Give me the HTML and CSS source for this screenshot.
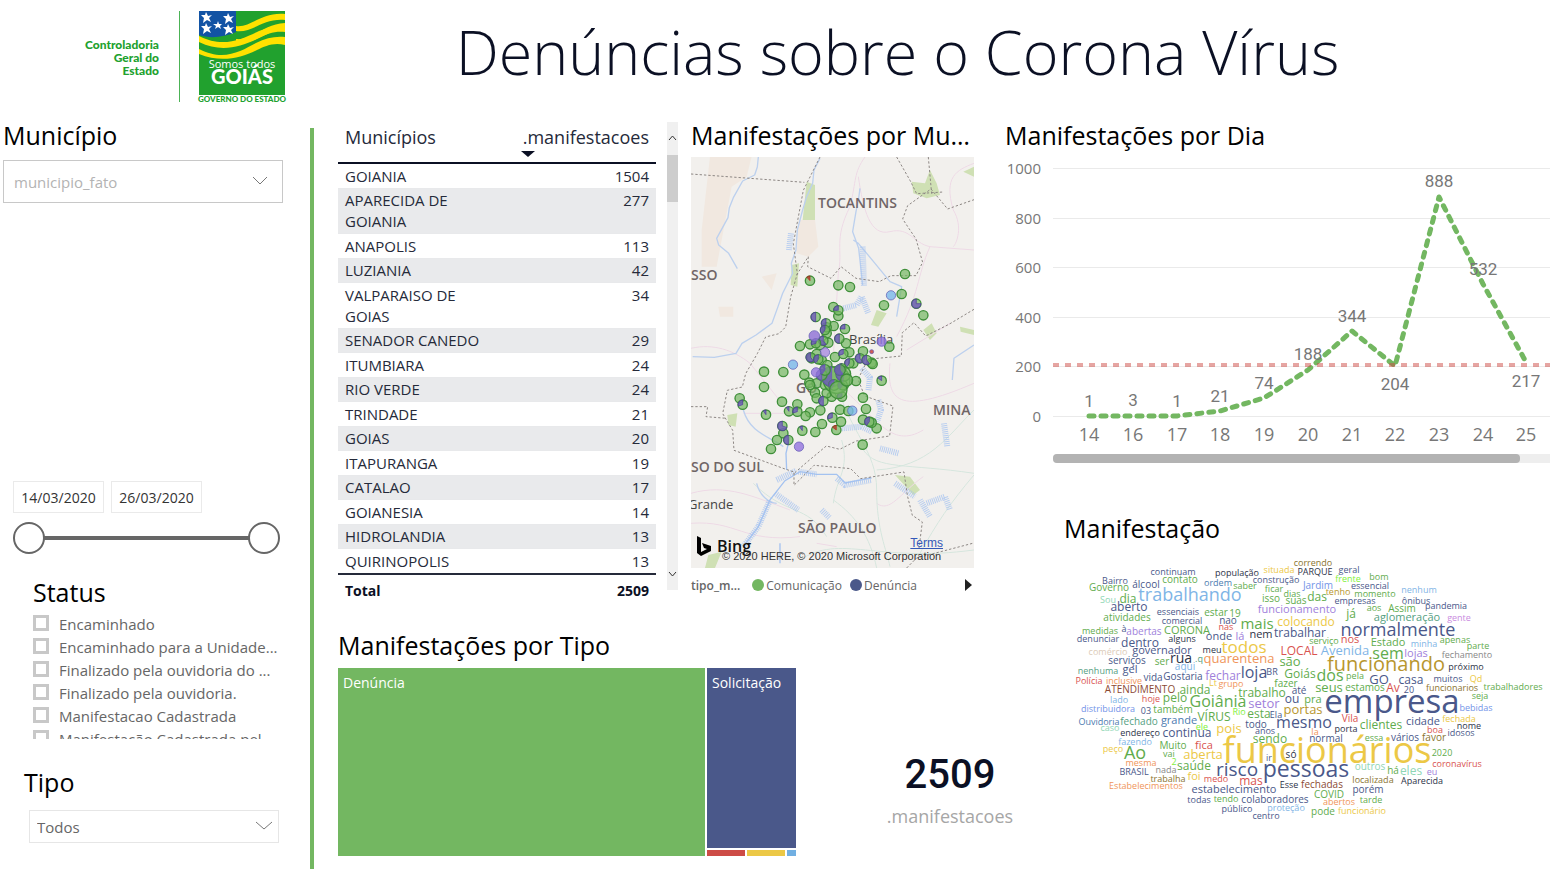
FILE: index.html
```html
<!DOCTYPE html>
<html lang="pt-BR">
<head>
<meta charset="utf-8">
<title>Denúncias sobre o Corona Vírus</title>
<link rel="stylesheet" href="styles.css">
</head>
<body>
<header class="header">
	<div class="brand">
		<div class="brand-name">Controladoria<br>Geral do<br>Estado</div>
		<svg class="brand-logo" viewBox="0 0 86 91" role="img" aria-label="Goiás">
			<rect width="86" height="84" fill="#21a12e"/>
			<path d="M37 15C52 17 62 1 86 3V9C64 7 54 22 37 20zM37 28C54 30 64 13 86 12V18C66 20 55 34 37 32z" fill="#ffe100"/>
			<path d="M0 25C25 38 45 27 60 20C70 16 77 15 86 16V21C75 20 68 23 60 27C42 36 22 42 0 31z" fill="#ffe100"/>
			<path d="M0 38C25 51 42 40 57 32C67 27 76 25 86 26V34C75 31 66 35 58 39C42 47 22 52 0 43z" fill="#ffe100"/>
			<path d="M0 0H37V21C25 26 12 28 0 24z" fill="#1253a4"/>
			<g fill="#fff">
				<path id="star" d="M7 1l2 4 4-1-3 3 2 4-4-2-4 3 1-5-3-3 4 0z"/>
				<use href="#star" x="22" y="1"/>
				<use href="#star" x="0" y="11"/>
				<use href="#star" x="22" y="12"/>
				<path d="M19 10l1 3 3 0-2 2 1 3-3-2-3 2 1-3-3-2 4 0z"/>
			</g>
			<text x="43" y="57" class="logo-small">Somos todos</text>
			<text x="43" y="73" class="logo-big">GOIÁS</text>
			<text x="43" y="91" class="logo-foot">GOVERNO DO ESTADO</text>
		</svg>
	</div>
	<h1>Denúncias sobre o Corona Vírus</h1>
</header>

<main class="main">
	<aside class="filters">
		<label class="title" for="municipio">Município</label>
		<div class="dropdown dropdown-big">
			<select id="municipio"><option>municipio_fato</option></select>
			<svg viewBox="0 0 16 10"><path d="M1 1l7 7 7-7"/></svg>
		</div>
		<div class="dates">
			<input type="text" value="14/03/2020" aria-label="Data inicial">
			<input type="text" value="26/03/2020" aria-label="Data final">
		</div>
		<div class="slider">
			<input type="range" min="0" max="12" value="0" aria-label="Início">
			<input type="range" min="0" max="12" value="12" aria-label="Fim">
		</div>
		<h2 class="title status-title">Status</h2>
		<div class="status">
			<label><input type="checkbox"><span>Encaminhado</span></label>
			<label><input type="checkbox"><span>Encaminhado para a Unidade...</span></label>
			<label><input type="checkbox"><span>Finalizado pela ouvidoria do ...</span></label>
			<label><input type="checkbox"><span>Finalizado pela ouvidoria.</span></label>
			<label><input type="checkbox"><span>Manifestacao Cadastrada</span></label>
			<label><input type="checkbox"><span>Manifestação Cadastrada pel</span></label>
		</div>
		<label class="title tipo-title" for="tipo">Tipo</label>
		<div class="dropdown dropdown-small">
			<select id="tipo"><option>Todos</option></select>
			<svg viewBox="0 0 16 10"><path d="M0 1l8 7 8-7"/></svg>
		</div>
	</aside>
	<div class="divider"></div>

	<div class="center">
		<div class="top">
			<div class="table-box">
				<table class="cities">
					<thead>
						<tr><th>Municípios</th><th class="num">.manifestacoes<i class="sort"></i></th></tr>
					</thead>
					<tbody>
						<tr><td>GOIANIA</td><td>1504</td></tr>
						<tr><td>APARECIDA DE<br>GOIANIA</td><td>277</td></tr>
						<tr><td>ANAPOLIS</td><td>113</td></tr>
						<tr><td>LUZIANIA</td><td>42</td></tr>
						<tr><td>VALPARAISO DE<br>GOIAS</td><td>34</td></tr>
						<tr><td>SENADOR CANEDO</td><td>29</td></tr>
						<tr><td>ITUMBIARA</td><td>24</td></tr>
						<tr><td>RIO VERDE</td><td>24</td></tr>
						<tr><td>TRINDADE</td><td>21</td></tr>
						<tr><td>GOIAS</td><td>20</td></tr>
						<tr><td>ITAPURANGA</td><td>19</td></tr>
						<tr><td>CATALAO</td><td>17</td></tr>
						<tr><td>GOIANESIA</td><td>14</td></tr>
						<tr><td>HIDROLANDIA</td><td>13</td></tr>
						<tr><td>QUIRINOPOLIS</td><td>13</td></tr>
					</tbody>
					<tfoot>
						<tr><td>Total</td><td>2509</td></tr>
					</tfoot>
				</table>
				<div class="vscroll">
					<svg viewBox="0 0 9 6"><path d="M1 5l3.5-4L8 5"/></svg>
					<div class="vthumb"></div>
					<svg viewBox="0 0 9 6"><path d="M1 1l3.5 4L8 1"/></svg>
				</div>
			</div>

			<section class="map-box">
				<h2 class="title map-title">Manifestações por Município</h2>
				<div class="map">
					<svg viewBox="0 0 283 411">
						<rect width="283" height="411" fill="#f2f0ed"/>
						<g transform="scale(.3333) translate(-3 -21)" fill="none">
							<path d="M60 20H185L170 80 125 110 80 350H35V240zM325 210h50l10 80-30 30-35-10zM215 380l45-10-15 50zM85 470h45v30H90z" fill="#f1e8e0"/>
							<path d="M350 95l25 10V210H338zM305 345l22-5-5 70-20-5zM665 95l40 5 15-40 20 40 10 35-40 10-40-15zM560 480l30 10-25 40-22-5zM700 540l25-20 15 30-20 20zM810 530l42 10v15l-40-10zM112 795l30-5-5 40-22-5zM615 975l45 5 30 40-20 15zM55 1215l40-10-20 49H45zM820 65l32-15v30z" fill="#cfe0b4"/>
							<g stroke="#eedae6" stroke-width="3">
								<path d="M525 21C490 70 500 90 480 170 430 270 460 300 445 370L430 620M505 80C520 180 540 260 600 245S670 280 720 290L852 300M852 40C800 60 760 80 790 180 820 230 800 280 790 290M720 290C680 380 690 430 620 560M3 595C70 580 130 600 180 640L300 790H160M600 640C590 750 620 800 852 700M440 700C560 800 600 900 700 840M3 1030C110 1000 190 1040 300 1080M3 1120C140 1110 160 1180 330 1160M560 1060C600 1090 630 1030 700 980M380 1180l60 10M650 600L780 520"/>
							</g>
							<g stroke="#d6e6de" stroke-width="3">
								<path d="M440 700C480 850 560 900 560 1020S590 1200 600 1250M520 900C560 960 650 940 852 970M430 1050C500 1100 540 1160 560 1254M852 975C780 1060 740 1120 690 1210M190 1000C290 1100 350 1060 410 1160M455 870C480 960 440 980 430 1060M852 780C770 860 720 950 560 960M330 1230C450 1150 560 1240 852 1200"/>
							</g>
							<g stroke="#bcd0ee" stroke-width="4" stroke-linejoin="round">
								<path d="M390 25l-18 35-4 40-18 40-12 40-16 60-4 60-14 40 4 30-30 60-14 40-18 50-48 35-42 25-18 30-65 12-65-2M205 21l-3 30-8 24-36 18-28 50-12 30-4 30-34 62 6 20 30 25 26 46M510 115l-4 30-8 40-10 60 18 50 12 110M490 270l15 10 50 60 45 55 35 15-15 90M852 585l-60 40-5 65"/>
								<path d="M160 780c20 70 80 80 120 110M200 1000c10 40 40 60 60 60"/>
							</g>
							<!-- reservoirs -->
							<g stroke="#a4c2f0" stroke-width="18" stroke-dasharray="3 3" stroke-opacity=".75">
								<path d="M518 290l4 120M460 475l40-10 15-25 20 50M303 250l-6 50M515 655l25 28-5 40M565 750l8 30-12 35M455 835l60-5 30 15"/>
								<path d="M160 1190l45-60 35-80M255 1030l70 50M260 990l60-28M325 965l55 8M440 985l25 20 80-15M570 895l55 15M762 820l10 70M395 1080l25 25M615 1000l60 40M690 1050l30 50M710 1060l55-20 15 40"/>
							</g>
							<g stroke="#a4c2f0" stroke-width="4">
								<path d="M160 1190l45-60 35-80 45-58 45-27 50 8 60 0 25 26 80-15M300 860l-12 50 2 50M270 1180v60"/>
							</g>
							<g stroke="#8d8784" stroke-width="3" stroke-dasharray="7 6">
								<path d="M3 72l340 25M390 21l-50 100-30 160 12 90-20 70-15 90-20 20-40 10-25 50-35 60-10 40-45 10-14 70 30 50 4 60 150 55 30 10 0 40 60-60 110 10 30 30 130-20 10 70 15 60 30 20-10 80"/>
								<path d="M320 375l35-55-2 30 70 35 30-35 45 35 70 10 35-18 75 0 20-40-20-70-20-30-20-30 15-40 70-50 50 60 85-30M620 21l40 70 20 40 80-5M715 21l10 110M852 478l-75 45-70 35-35-40-35 30-3 70-100 10-30 60 20 50 85 30-10 90-100 15-50 25-40-10-60 50-40 35M3 770h50l-5 30 60 5M650 1254l30-30 172-45"/>
							</g>
						</g>
						<g class="map-labels">
							<text x="127" y="51">TOCANTINS</text>
							<text x="0" y="123">SSO</text>
							<text x="105" y="236">GO</text>
							<text x="242" y="258">MINA</text>
							<text x="0" y="315">SO DO SUL</text>
							<text x="107" y="376">SÃO PAULO</text>
							<text x="-3" y="352" class="city">Grande</text>
							<text x="158" y="187" class="city">Brasília</text>
							<text x="26" y="395" class="bing">Bing</text>
							<text x="31" y="403" class="copy">© 2020 HERE, © 2020 Microsoft Corporation</text>
						</g>
						<path d="M6 379l4 2v14l6-3-3-1-2-5 9 3v5l-10 5-4-3z"/>
						<g id="pins" transform="scale(.3333) translate(-3 -21)"></g>
					</svg>
					<a href="#" class="terms">Terms</a>
				</div>
				<div class="legend">
					<b>tipo_m...</b>
					<span class="dot green"></span><span>Comunicação</span>
					<span class="dot blue"></span><span>Denúncia</span>
					<button type="button" aria-label="Próximo"></button>
				</div>
			</section>
		</div>

		<div class="bottom">
			<section class="tree-box">
				<h2 class="title">Manifestações por Tipo</h2>
				<div class="treemap">
					<div class="cell green">Denúncia</div>
					<div class="cell blue">Solicitação</div>
					<div class="cell-row">
						<div class="red"></div><div class="yellow"></div><div class="sky"></div>
					</div>
				</div>
			</section>
			<div class="card">
				<div class="card-value">2509</div>
				<div class="card-label">.manifestacoes</div>
			</div>
		</div>
	</div>

	<div class="right">
		<h2 class="title">Manifestações por Dia</h2>
		<svg class="chart" viewBox="0 0 545 310">
			<path class="grid" d="M48 11.5H545M48 61.5H545M48 110.5H545M48 160.5H545M48 209.5H545M48 259.5H545"/>
			<g class="y-axis">
				<text x="36" y="17">1000</text><text x="36" y="67">800</text><text x="36" y="116">600</text>
				<text x="36" y="166">400</text><text x="36" y="215">200</text><text x="36" y="265">0</text>
			</g>
			<polyline class="series" points="84,259 128,259 172,259 215,254 259,241 303,213 347,174 390,209 434,40 478,127 521,205"/>
			<path class="avg" d="M48 208H545"/>
			<g class="x-axis">
				<text x="84" y="284">14</text><text x="128" y="284">16</text><text x="172" y="284">17</text>
				<text x="215" y="284">18</text><text x="259" y="284">19</text><text x="303" y="284">20</text>
				<text x="347" y="284">21</text><text x="390" y="284">22</text><text x="434" y="284">23</text>
				<text x="478" y="284">24</text><text x="521" y="284">25</text>
			</g>
			<g class="values">
				<text x="84" y="250">1</text><text x="128" y="249">3</text><text x="172" y="250">1</text>
				<text x="215" y="245">21</text><text x="259" y="232">74</text><text x="303" y="203">188</text>
				<text x="347" y="165">344</text><text x="390" y="233">204</text><text x="434" y="30">888</text>
				<text x="478" y="118">532</text><text x="521" y="230">217</text>
			</g>
			<rect x="48" y="297" width="510" height="9" rx="4" fill="#eee"/>
			<rect x="48" y="297" width="467" height="9" rx="4" fill="#b3b3b3"/>
		</svg>
		<section class="cloud-box">
			<h2 class="title">Manifestação</h2>
			<svg id="cloud" class="cloud" viewBox="1064 550 486 275"></svg>
		</section>
	</div>
</main>
<script src="script.js"></script>
</body>
</html>
```
FILE: styles.css
```css
* { box-sizing: border-box; }
body {
	margin: 0;
	background: #fff;
	font-family: "Segoe UI", "Open Sans", sans-serif;
	font-size: 15px;
	color: #000;
	overflow-x: hidden;
}
h1, h2 { margin: 0; font-weight: 400; }
svg { display: block; }
.title {
	display: block;
	font-size: 25px;
	line-height: 34px;
	white-space: nowrap;
}

/* header */
.header { display: flex; height: 118px; }
.brand {
	display: flex;
	flex: none;
	width: 285px;
	padding-top: 11px;
}
.brand-name {
	width: 180px;
	height: 91px;
	padding: 27px 20px 0 0;
	border-right: 1px solid #4cb356;
	text-align: right;
	font: 900 12px/13px Lato, sans-serif;
	color: #21a12e;
}
.brand-logo { width: 86px; height: 91px; margin-left: 19px; overflow: visible; }
.brand-logo text { text-anchor: middle; fill: #fff; }
.brand-logo .logo-small { font-size: 11px; }
.brand-logo .logo-big { font: 900 20px Lato, sans-serif; }
.brand-logo .logo-foot { font: 900 8px Lato, sans-serif; fill: #21a12e; }
h1 {
	flex: 1;
	padding: 11px 40px 0 0;
	text-align: center;
	font-size: 61px;
	line-height: 82px;
	font-weight: 300;
	color: #0b1024;
	white-space: nowrap;
}

.main { display: flex; min-height: calc(100vh - 118px); }

/* filters */
.filters { flex: none; width: 310px; padding-left: 3px; }
.dropdown { position: relative; }
.dropdown select {
	width: 100%;
	height: 100%;
	padding: 0 7px;
	border: 1px solid #e6e6e6;
	border-radius: 0;
	background: #fff;
	appearance: none;
	font: inherit;
	color: #666;
}
.dropdown svg {
	position: absolute;
	right: 7px;
	top: 11px;
	width: 16px;
	height: 10px;
	fill: none;
	stroke: #777;
	pointer-events: none;
}
.dropdown-big { width: 280px; height: 43px; margin-top: 8px; }
.dropdown-big select { padding: 0 10px; border-color: #c8c8c8; color: #b3b3b3; }
.dropdown-big svg { right: 15px; top: 16px; }
.dropdown-small { width: 250px; height: 33px; margin: 11px 0 0 26px; }
.dates { display: flex; gap: 7px; margin: 278px 0 0 10px; }
.dates input {
	width: 91px;
	height: 32px;
	padding: 0;
	border: 1px solid #eaeaea;
	text-align: center;
	font: inherit;
	font-size: 14px;
	color: #333;
}
.slider {
	position: relative;
	width: 267px;
	height: 33px;
	margin: 8px 0 0 10px;
	background: linear-gradient(#666, #666) center / 235px 4px no-repeat;
}
.slider input {
	position: absolute;
	left: 0;
	top: 0;
	width: 100%;
	height: 33px;
	margin: 0;
	appearance: none;
	background: none;
	pointer-events: none;
}
.slider input::-webkit-slider-thumb {
	appearance: none;
	width: 32px;
	height: 32px;
	border: 2px solid #666;
	border-radius: 50%;
	background: #fff;
	pointer-events: auto;
}
.status-title { margin: 21px 0 4px 30px; }
.status { height: 126px; margin-left: 30px; overflow: hidden; }
.status label {
	display: flex;
	align-items: center;
	gap: 10px;
	height: 23px;
	line-height: 23px;
	color: #666;
	white-space: nowrap;
}
.status input {
	flex: none;
	width: 16px;
	height: 16px;
	margin: 0 0 4px;
	border: 3px solid #c8c8c8;
	background: #fff;
	appearance: none;
}
.status input:checked { background: #666; }
.tipo-title { margin: 26px 0 0 21px; }
.divider { flex: none; width: 4px; margin: 10px 0 7px; background: #73b761; }

/* table */
.center { flex: none; width: 660px; padding-left: 24px; }
.top { display: flex; gap: 13px; }
.table-box { display: flex; gap: 11px; flex: none; width: 340px; padding-top: 4px; }
.cities { width: 318px; border-collapse: collapse; color: #252a3a; align-self: flex-start; }
.cities th {
	position: relative;
	height: 41px;
	padding: 3px 7px 0;
	border-bottom: 2px solid #0b1024;
	text-align: left;
	vertical-align: top;
	font-size: 18px;
	line-height: 25px;
	font-weight: 400;
}
.cities .sort {
	position: absolute;
	left: 6px;
	top: 29px;
	border: 7px solid transparent;
	border-top: 6px solid #0b1024;
	border-bottom: 0;
}
.cities td {
	padding: 2px 7px 1px;
	border-bottom: 1px solid #e8e9eb;
	line-height: 21px;
	vertical-align: top;
}
.cities td + td, .cities .num { width: 141px; text-align: right; padding-left: 0; }
.cities tbody tr:nth-child(even) { background: #e9eaec; }
.cities tbody tr:nth-child(even) td { padding-top: 1px; }
.cities tfoot td { border-top: 2px solid #252a3a; border-bottom: 0; padding-top: 5px; font-size: 14px; font-weight: 700; color: #0b1024; }
.vscroll {
	display: flex;
	flex-direction: column;
	width: 11px;
	height: 468px;
	padding: 13px 1px;
	background: #f0f0f0;
}
.vscroll svg { width: 9px; height: 6px; fill: none; stroke: #333; }
.vscroll svg:last-child { margin-top: auto; }
.vthumb { height: 47px; margin: 14px -1px 0; background: #cdcdcd; }

/* map */
.map-box { width: 283px; }
.map-title { overflow: hidden; text-overflow: ellipsis; }
.map { position: relative; margin-top: 5px; }
.map-labels text { font-size: 14px; font-weight: 600; fill: #6f6566; }
.map-labels .city { font-size: 13px; font-weight: 400; fill: #444; }
.map-labels .bing { font-size: 16px; fill: #111; }
.map-labels .copy { font: 11px "Liberation Sans", Arial, sans-serif; fill: #333; }
.terms {
	position: absolute;
	right: 31px;
	bottom: 18px;
	font: 12px/14px "Liberation Sans", Arial, sans-serif;
	color: #3558b8;
}
.legend {
	display: flex;
	align-items: center;
	height: 34px;
	font-size: 12px;
	color: #666;
}
.legend b { font-weight: 600; margin-right: 12px; }
.dot { width: 12px; height: 12px; margin-right: 2px; border-radius: 50%; }
.dot.blue { margin-left: 8px; }
.green { background: #73b761; }
.blue { background: #4a588a; }
.red { background: #cd4c46; }
.yellow { background: #ecc846; }
.sky { background: #71afe2; }
.legend button {
	width: 0;
	height: 0;
	margin: 0 2px 0 auto;
	padding: 0;
	border: 6px solid transparent;
	border-left: 7px solid #222;
	border-right: 0;
	background: none;
}

/* treemap and total */
.bottom { display: flex; margin-top: 26px; }
.tree-box { flex: none; width: 458px; }
.bottom .title { margin-bottom: 6px; }
.treemap {
	display: grid;
	grid-template: 180px 6px / 367px 1fr;
	gap: 2px;
}
.cell { padding: 5px; font-size: 14px; line-height: 20px; color: #fff; }
.cell.green { grid-row: span 2; }
.cell-row { display: grid; grid-template-columns: 38fr 38fr 9fr; gap: 2px; }
.card { flex: 1; margin: 121px -53px 0 77px; text-align: center; }
.card-value { font: 500 40px/52px Roboto, sans-serif; color: #0b1024; }
.card-label { font-size: 18px; line-height: 30px; color: #a6a6a6; }

/* chart */
.right { flex: 1; min-width: 0; padding-left: 31px; }
.chart { width: 100%; margin-top: 5px; }
.grid { stroke: #eaeaea; }
.series {
	fill: none;
	stroke: #73b761;
	stroke-width: 5;
	stroke-linecap: round;
	stroke-linejoin: round;
	stroke-dasharray: 5 7;
}
.avg { stroke: #cd4c46; stroke-opacity: .5; stroke-width: 4; stroke-dasharray: 6 6; }
.chart text { fill: #777; }
.y-axis text { font-size: 15px; text-anchor: end; }
.x-axis text { font-size: 18px; text-anchor: middle; }
.values text { font: 17px Roboto, sans-serif; text-anchor: middle; }
.cloud-box { padding-left: 59px; margin-top: 44px; }
.cloud { width: 100%; margin-top: 6px; }
.cloud text { text-anchor: middle; }
```
FILE: script.js
```js
var NS = 'http://www.w3.org/2000/svg';

function add(parent, tag, attrs, text) {
	var el = document.createElementNS(NS, tag);
	for (var k in attrs) el.setAttribute(k, attrs[k]);
	if (text) el.textContent = text;
	parent.appendChild(el);
	return el;
}

var colors = {
	g: '#5fac4d', n: '#4a588a', p: '#a07fdb', l: '#7fb5e6', y: '#ecc846', o: '#f0955a',
	r: '#d9534f', v: '#8a7430', s: '#888888', b: '#4c7bb0', t: '#55a07f', e: '#7ff03a',
	c: '#dccbb8', k: '#c98be0', w: '#8b4a33', d: '#2d3348', a: '#8fd6b5', u: '#7394e8', m: '#b8962e'
};

// text, centre x, baseline, size, colour
var words = [
	['funcionários',1327,762,36,'y'],['empresa',1392,712,33,'n'],['pessoas',1306,776,23,'n'],['funcionando',1386,670,20,'m'],
	['risco',1237,775,19,'n'],['trabalhando',1190,600,18,'l'],['normalmente',1398,635,18,'n'],['Ao',1135,758,18,'g'],
	['todos',1244,652,17,'y'],['Goiânia',1218,706,16,'g'],['loja',1254,677,16,'n'],['dos',1330,680,16,'g'],['sem',1388,658,16,'g'],
	['mesmo',1304,727,16,'n'],['mais',1257,628,15,'g'],['rua',1181,662,14,'d'],
	['continuam',1173,574,9,'n'],['Bairro',1115,583,9,'n'],['contato',1180,582,10,'g'],['Governo',1109,590,10,'g'],
	['álcool',1146,587,10,'n'],['ordem',1218,585,9,'b'],['saber',1245,588,9,'g'],['população',1237,575,9,'d'],
	['Sou',1108,602,9,'a'],['dia',1128,602,12,'g'],['aberto',1129,610,12,'n'],['essenciais',1178,614,9,'n'],
	['estar',1216,615,10,'g'],['19',1235,616,10,'g'],['atividades',1127,620,10,'g'],['comercial',1182,623,9,'n'],
	['nao',1228,623,10,'n'],['nas',1226,629,9,'r'],['medidas',1100,633,9,'g'],['à',1124,631,9,'n'],
	['abertas',1144,634,10,'p'],['CORONA',1187,633,11,'g'],['denunciar',1098,641,9,'n'],['alguns',1182,641,9,'d'],
	['onde',1219,639,11,'n'],['lá',1240,639,11,'p'],['dentro',1140,646,12,'n'],['comércio',1108,654,9,'c'],
	['governador',1162,653,11,'n'],['meu',1212,652,9,'d'],['serviços',1127,663,10,'n'],['ser',1162,664,10,'g'],
	['.q',1199,661,9,'t'],['quarentena',1239,662,13,'o'],['aqui',1185,669,10,'l'],['nenhuma',1098,673,9,'t'],
	['gel',1130,672,11,'n'],['vida',1153,680,10,'n'],['Gostaria',1183,679,10,'n'],['fechar',1223,679,12,'p'],
	['Polícia',1089,683,9,'r'],['inclusive',1124,683,9,'o'],['Lt',1213,685,9,'y'],['grupo',1231,686,9,'o'],
	['ATENDIMENTO',1140,692,10,'w'],['ainda',1195,693,12,'g'],['lado',1119,702,9,'l'],['hoje',1151,701,9,'r'],
	['pelo',1175,701,12,'g'],['distribuidora',1108,711,9,'u'],['03',1146,713,9,'n'],['também',1173,712,10,'g'],
	['VÍRUS',1214,720,12,'g'],['Rio',1239,714,9,'e'],['Ouvidoria',1099,724,9,'b'],['fechado',1139,724,10,'t'],
	['grande',1179,723,11,'b'],['caso',1110,730,9,'a'],['ele',1202,729,9,'e'],['endereço',1140,735,9,'d'],
	['continua',1187,736,12,'n'],['pois',1229,732,13,'y'],['fazendo',1135,744,9,'l'],['peço',1113,751,9,'y'],
	['Muito',1173,748,10,'g'],['fica',1204,748,11,'r'],['vai',1169,756,9,'g'],['aberta',1203,758,13,'y'],
	['mesma',1141,765,9,'o'],['2',1174,764,9,'e'],['saúde',1194,769,12,'g'],['BRASIL',1134,774,9,'n'],
	['nada',1166,772,9,'s'],['trabalha',1168,781,9,'v'],['foi',1194,779,11,'y'],['medo',1216,781,9,'r'],
	['Estabelecimentos',1146,788,9,'o'],['estabelecimento',1234,792,11,'n'],['todas',1199,802,9,'n'],['tendo',1226,801,9,'g'],
	['público',1237,811,9,'n'],['situada',1279,572,9,'y'],['correndo',1313,565,9,'v'],['PARQUE',1315,574,9,'d'],
	['geral',1349,572,9,'n'],['construção',1276,582,9,'n'],['ficar',1274,591,9,'g'],['dias',1292,596,9,'g'],
	['Jardim',1318,588,10,'u'],['frente',1348,581,9,'e'],['bom',1379,579,9,'g'],['isso',1271,601,10,'g'],
	['suas',1296,603,10,'g'],['das',1317,600,12,'g'],['tenho',1338,594,9,'m'],['momento',1375,596,9,'g'],
	['essencial',1370,588,9,'n'],['empresas',1355,603,9,'n'],['funcionamento',1297,612,11,'p'],['já',1351,617,12,'g'],
	['aos',1374,610,9,'g'],['Assim',1402,611,10,'g'],['colocando',1306,625,12,'y'],['aglomeração',1407,620,11,'t'],
	['nem',1261,637,11,'d'],['trabalhar',1300,636,12,'n'],['serviço',1324,643,9,'g'],['nos',1350,642,11,'r'],
	['Estado',1388,645,11,'g'],['LOCAL',1299,654,12,'r'],['Avenida',1345,654,13,'l'],['são',1290,665,13,'g'],
	['BR',1272,674,9,'n'],['Goiás',1300,677,12,'g'],['pela',1355,678,9,'g'],['GO',1379,683,13,'n'],
	['fazer',1286,686,10,'g'],['seus',1329,691,13,'g'],['estamos',1365,690,10,'g'],['Av',1393,691,12,'r'],
	['20',1409,692,9,'n'],['nenhum',1419,592,9,'l'],['ônibus',1416,603,9,'n'],['pandemia',1446,608,9,'n'],
	['gente',1459,620,9,'k'],['minha',1424,646,9,'l'],['apenas',1455,642,9,'g'],['parte',1478,648,9,'g'],
	['lojas',1416,656,11,'p'],['fechamento',1467,657,9,'s'],['próximo',1466,669,9,'d'],['casa',1411,683,12,'n'],
	['muitos',1448,681,9,'n'],['Qd',1476,681,9,'y'],['funcionarios',1452,690,9,'v'],['trabalhadores',1513,689,9,'g'],
	['seja',1480,698,9,'g'],['bebidas',1476,710,9,'u'],['cidade',1423,724,11,'n'],['fechada',1459,721,9,'y'],
	['nome',1469,728,9,'d'],['boa',1435,732,9,'r'],['idosos',1461,735,9,'n'],['vários',1405,740,10,'n'],
	['favor',1434,740,10,'v'],['essa',1374,740,9,'g'],['clientes',1381,728,12,'g'],['2020',1442,755,9,'g'],
	['coronavírus',1457,766,9,'r'],['há',1393,773,10,'g'],['eles',1411,774,12,'a'],['eu',1432,774,9,'p'],
	['Aparecida',1422,783,9,'d'],['localizada',1373,782,9,'v'],['trabalho',1262,696,12,'g'],['até',1299,693,10,'n'],
	['setor',1264,707,13,'p'],['ou',1292,702,12,'n'],['pra',1313,702,11,'g'],['portas',1303,713,13,'m'],
	['esta',1259,717,12,'g'],['Ela',1276,717,9,'n'],['todo',1256,727,10,'n'],['Vila',1350,721,10,'r'],
	['porta',1346,731,9,'d'],['anos',1265,733,9,'n'],['la',1315,734,9,'o'],['normal',1326,741,10,'n'],
	['sendo',1270,742,12,'g'],['ir',1269,760,9,'n'],['só',1291,757,10,'d'],['outros',1370,769,10,'a'],
	['mas',1251,784,12,'r'],['Esse',1289,787,9,'d'],['fechadas',1322,787,10,'w'],['porém',1368,792,10,'n'],
	['COVID',1329,797,10,'g'],['abertos',1339,804,9,'o'],['tarde',1371,802,9,'g'],['colaboradores',1275,802,10,'n'],
	['proteção',1286,810,9,'l'],['pode',1323,814,10,'g'],['funcionário',1362,813,9,'y'],['centro',1266,818,9,'n']
];
var cloud = document.getElementById('cloud');
words.forEach(function (w) {
	add(cloud, 'text', {x: w[1], y: w[2], 'font-size': w[3], fill: colors[w[4]]}, w[0]);
});

// x, y, share of the second type, colour of the slice, radius
var P = '#6b4cc4', R = '#b3261e';
var pins = [
	[360,392,.12,R],[445,406],[480,411],[645,372],[635,432],[582,466],[700,496],[430,471],[445,498],[431,528],
	[330,588],[598,590],[222,665],[280,666],[343,674],[360,583],[468,580],[478,607],[519,604],[435,621],[390,585],
	[415,578],[410,550],[395,630],[412,645],[490,640],[545,638],[548,642],[498,693],[410,532],[380,612],[365,625],
	[445,481,.25],[377,501,.5],[408,520,.5],[465,537,.25],[679,461,.75],[448,566,.5],[400,572,.6],[405,540,.4],
	[378,580,.3],[362,622,.6],[385,628,.4],[460,612,.3],[510,625,.6],[530,630,.6],[478,640,.4],[455,655,.5],
	[222,711],[149,745],[276,755],[322,763],[360,787],[391,781],[450,779],[475,783],[528,777],[519,743],
	[519,809],[560,835],[545,818],[396,822],[453,815],[376,846],[280,850],[261,870],[243,897],[518,884],[347,798],
	[358,698],[380,700],[375,728],[380,745],[425,740],[405,705],[410,730],[360,705],[456,740,.3],
	[158,764,.3],[228,794,.1],[297,784,.1],[322,785,.3],[277,828,.7],[337,842,.1],[295,870,.5],[439,840,.15,R],
	[427,803,.3],[538,815,.4],[575,692,.15],[400,753,.5],
	[440,690,0,P,40],[425,680,.5,P,30],[460,672,.5,P,22],[395,675,.5,P,16],[432,705,.4,P,16],[458,706,.4,P,14],
	[450,660,.6,P,16],[405,660,.4,P,16],[445,720,0,P,26],[470,690,0,P,18]
];
var solids = [[373,558,'#8d6fd6',16],[405,607,'#a98be0',14],[378,667,'#9474de',14],[575,575,'#9474de',14],
	[327,890,'#9474de',14],[603,436,'#79b8ea',14],[309,644,'#79b8ea',14],[487,782,'#79b8ea',14],[545,605,'#c8372d',6]];
var box = document.getElementById('pins');
pins.forEach(function (p) {
	var r = p[4] || 14, a = 2 * Math.PI * (p[2] || 0);
	add(box, 'circle', {cx: p[0], cy: p[1], r: r, fill: '#73b761', 'fill-opacity': .7, stroke: '#3f8f39', 'stroke-width': 4});
	if (a) {
		add(box, 'path', {
			d: 'M' + p[0] + ' ' + p[1] + 'v' + -r + 'A' + r + ' ' + r + ' 0 ' + (p[2] > .5 ? 1 : 0) + ' 0 ' +
				(p[0] - r * Math.sin(a)) + ' ' + (p[1] - r * Math.cos(a)) + 'z',
			fill: p[3] || P, 'fill-opacity': .7, stroke: p[3] || '#4e3a9c', 'stroke-width': 2
		});
	}
});
solids.forEach(function (s) {
	add(box, 'circle', {cx: s[0], cy: s[1], r: s[3], fill: s[2], 'fill-opacity': .8, stroke: '#5a54b0', 'stroke-width': 2});
});
```
